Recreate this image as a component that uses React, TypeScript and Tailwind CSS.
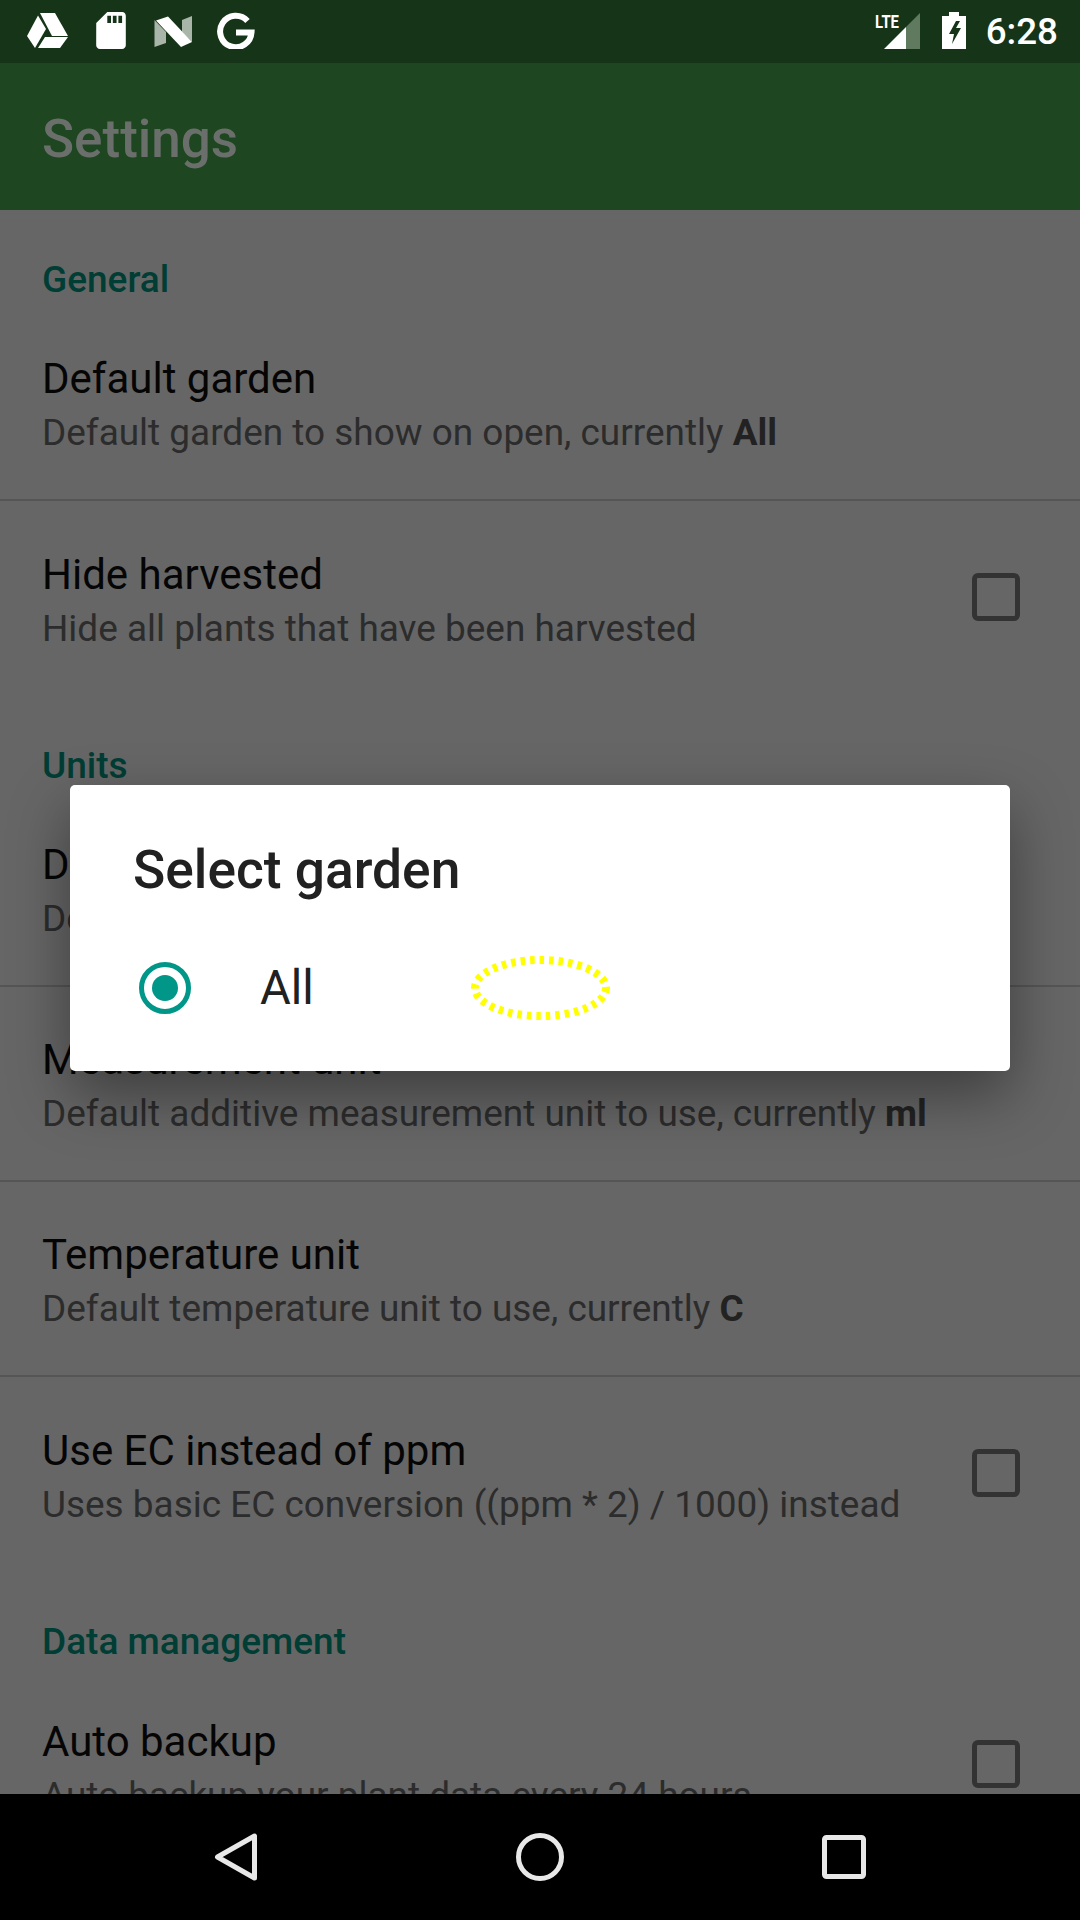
import React from 'react';

const Row = ({ title, sub, value, checkbox, divider }: { title: string; sub: string; value?: string; checkbox?: boolean; divider?: boolean }) => (
  <div className={`flex h-[195px] shrink-0 items-center pl-[42px] pr-[60px] ${divider ? 'border-b-2 border-[#555555]' : ''}`}>
    <div className="flex-1 pt-[6px]">
      <div className="text-[42px] leading-[54px] text-[#050505]">{title}</div>
      <div className="text-[36.95px] leading-[54px] text-[#2c2c2c] whitespace-nowrap">
        {sub}
        {value && <b className="font-bold text-[#222222]"> {value}</b>}
      </div>
    </div>
    {checkbox && <div className="-mt-[3px] h-[48px] w-[48px] rounded-[6px] border-[5px] border-[#333333]" />}
  </div>
);

const Header = ({ children }: { children: React.ReactNode }) => (
  <div className="flex h-[96px] shrink-0 items-start pl-[42px] pt-[48px] text-[37px] font-medium leading-[44px] text-[#003d34]">
    {children}
  </div>
);

export default function App() {
  return (
    <div className="relative flex h-[1920px] w-[1080px] flex-col overflow-hidden bg-[#666666] font-['Roboto',sans-serif]">
      {/* status bar */}
      <div className="flex h-[63px] shrink-0 items-start justify-between bg-[#163417] pl-[27px] pr-[22px] pt-[12px]">
        <div className="flex items-start">
          <svg className="mr-[28px]" width="41" height="37" viewBox="27 12 41 37" fill="#fff">
            <polygon points="40,13 55,13 68,36 52,36" />
            <polygon points="27,36 38,15.5 46,29 35,48" />
            <polygon points="45,37 68,37 60,48 38,48" />
          </svg>
          <svg className="mr-[28px]" width="30" height="37" viewBox="4 2 16 20" fill="#fff">
            <path d="M18 2h-8L4.02 8 4 20c0 1.1.9 2 2 2h12c1.1 0 2-.9 2-2V4c0-1.1-.9-2-2-2zm-6 6h-2V4h2v4zm3 0h-2V4h2v4zm3 0h-2V4h2v4z" />
          </svg>
          <svg className="mr-[25px]" width="38" height="37" viewBox="154 12 38 37">
            <polygon points="154.5,20 154.5,47 166,43 166,32" fill="#a9b5a9" />
            <polygon points="182,20 192,16 192,42 182,32" fill="#a9b5a9" />
            <polygon points="156,20.5 168,16.5 192,42 181,47" fill="#fff" />
          </svg>
          <svg width="38" height="37" viewBox="217 12 38 37" fill="none" stroke="#fff" strokeWidth="6">
            <path d="M247.5 21 A15.7 15.7 0 1 0 251.5 32.5 H236" />
          </svg>
        </div>
        <div className="flex items-start">
          <svg className="mr-[22px]" width="45" height="37" viewBox="876 12 45 37">
            <polygon points="885,49 907,27 907,49" fill="#fff" />
            <polygon points="907,49 907,27 921,13 921,49" fill="#5f7a5f" />
            <text x="876" y="28" fontSize="18" fontWeight="700" fill="#fff" textLength="24" lengthAdjust="spacingAndGlyphs" fontFamily="Roboto, sans-serif">LTE</text>
          </svg>
          <svg className="mr-[20px]" width="24" height="37" viewBox="943 12 24 37" fill="#fff">
            <path fillRule="evenodd" d="M950 12h10v4h7v33h-24V16h7zM957 21l-7 13h5l-2 10 9-16h-5l4-7z" />
          </svg>
          <span className="text-[36.75px] font-medium leading-[40px] text-white">6:28</span>
        </div>
      </div>

      {/* app bar */}
      <div className="flex h-[147px] shrink-0 items-center bg-[#1e4620] pl-[42px] pt-[7px]">
        <span className="text-[53px] font-medium text-[#6b6f6b]">Settings</span>
      </div>

      {/* settings list */}
      <div className="flex min-h-0 flex-1 flex-col overflow-hidden">
        <Header>General</Header>
        <Row title="Default garden" sub="Default garden to show on open, currently" value="All" divider />
        <Row title="Hide harvested" sub="Hide all plants that have been harvested" checkbox />
        <Header>Units</Header>
        <Row title="Delivery unit" sub="Default delivery unit to use, currently" value="l" divider />
        <Row title="Measurement unit" sub="Default additive measurement unit to use, currently" value="ml" divider />
        <Row title="Temperature unit" sub="Default temperature unit to use, currently" value="C" divider />
        <Row title="Use EC instead of ppm" sub="Uses basic EC conversion ((ppm * 2) / 1000) instead" checkbox />
        <Header>Data management</Header>
        <Row title="Auto backup" sub="Auto backup your plant data every 24 hours" checkbox />
      </div>

      {/* nav bar */}
      <div className="flex h-[126px] shrink-0 items-center justify-between bg-black px-[212px]">
        <svg width="48" height="48" viewBox="0 0 48 48" fill="none" stroke="#e8e8e8" strokeWidth="5" strokeLinejoin="round">
          <polygon points="5.5,24 42.5,3 42.5,45" />
        </svg>
        <svg width="48" height="48" viewBox="0 0 48 48" fill="none" stroke="#e8e8e8" strokeWidth="5">
          <circle cx="24" cy="24" r="21.5" />
        </svg>
        <svg width="48" height="48" viewBox="0 0 48 48" fill="none" stroke="#e8e8e8" strokeWidth="5">
          <rect x="4.5" y="4.5" width="39" height="39" rx="2" />
        </svg>
      </div>

      {/* dialog */}
      <div className="absolute left-[70px] top-[785px] h-[286px] w-[940px] rounded-[5px] bg-white shadow-[0_24px_60px_rgba(0,0,0,0.4)]">
        <div className="pl-[63px] pt-[54px] text-[53.3px] font-medium leading-[62px] text-[#212121]">Select garden</div>
        <div className="mt-[55px] flex items-center pl-[69px]">
          <svg width="52" height="52" viewBox="0 0 52 52">
            <circle cx="26" cy="26" r="23.5" fill="none" stroke="#009688" strokeWidth="5" />
            <circle cx="26" cy="26" r="13" fill="#009688" />
          </svg>
          <span className="ml-[69px] text-[47.25px] leading-[64px] text-[#212121]">All</span>
          <svg className="ml-[157px]" width="139" height="64" viewBox="0 0 139 64">
            <ellipse cx="69.5" cy="32" rx="65.5" ry="28" fill="none" stroke="#ffff00" strokeWidth="8" strokeDasharray="4.5 5" />
          </svg>
        </div>
      </div>
    </div>
  );
}
